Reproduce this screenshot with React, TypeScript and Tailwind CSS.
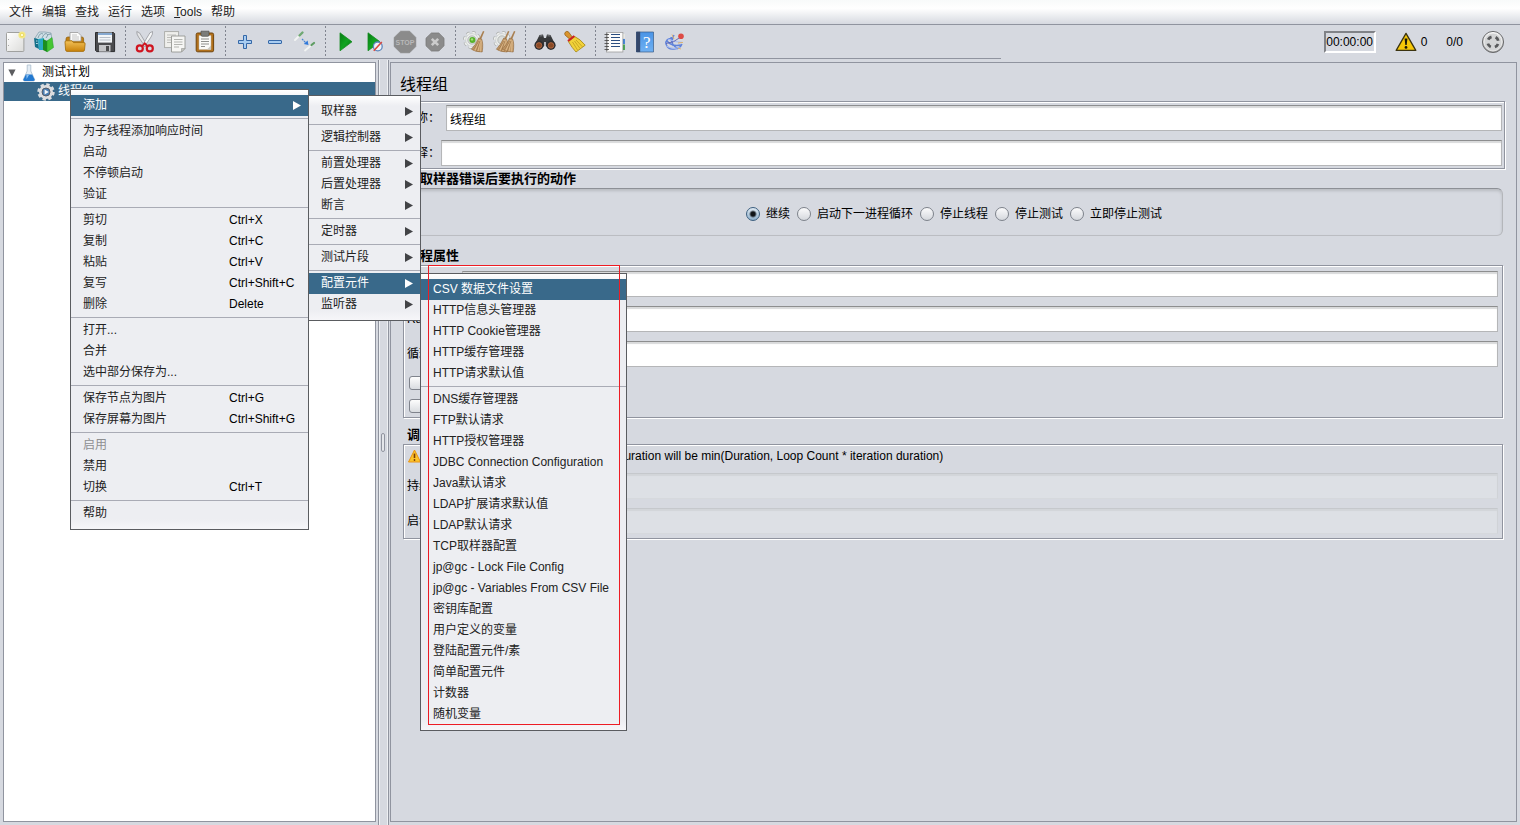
import React from "react";

type Item = { label: string; keys?: string; arrow?: boolean; active?: boolean; disabled?: boolean };
type Group = Item[];

const contextMenu: Group[] = [
  [{ label: "添加", arrow: true, active: true }],
  [{ label: "为子线程添加响应时间" }, { label: "启动" }, { label: "不停顿启动" }, { label: "验证" }],
  [
    { label: "剪切", keys: "Ctrl+X" },
    { label: "复制", keys: "Ctrl+C" },
    { label: "粘贴", keys: "Ctrl+V" },
    { label: "复写", keys: "Ctrl+Shift+C" },
    { label: "删除", keys: "Delete" },
  ],
  [{ label: "打开..." }, { label: "合并" }, { label: "选中部分保存为..." }],
  [
    { label: "保存节点为图片", keys: "Ctrl+G" },
    { label: "保存屏幕为图片", keys: "Ctrl+Shift+G" },
  ],
  [{ label: "启用", disabled: true }, { label: "禁用" }, { label: "切换", keys: "Ctrl+T" }],
  [{ label: "帮助" }],
];

const addMenu: Group[] = [
  [{ label: "取样器", arrow: true }],
  [{ label: "逻辑控制器", arrow: true }],
  [
    { label: "前置处理器", arrow: true },
    { label: "后置处理器", arrow: true },
    { label: "断言", arrow: true },
  ],
  [{ label: "定时器", arrow: true }],
  [{ label: "测试片段", arrow: true }],
  [
    { label: "配置元件", arrow: true, active: true },
    { label: "监听器", arrow: true },
  ],
];

const configMenu: Group[] = [
  [
    { label: "CSV 数据文件设置", active: true },
    { label: "HTTP信息头管理器" },
    { label: "HTTP Cookie管理器" },
    { label: "HTTP缓存管理器" },
    { label: "HTTP请求默认值" },
  ],
  [
    { label: "DNS缓存管理器" },
    { label: "FTP默认请求" },
    { label: "HTTP授权管理器" },
    { label: "JDBC Connection Configuration" },
    { label: "Java默认请求" },
    { label: "LDAP扩展请求默认值" },
    { label: "LDAP默认请求" },
    { label: "TCP取样器配置" },
    { label: "jp@gc - Lock File Config" },
    { label: "jp@gc - Variables From CSV File" },
    { label: "密钥库配置" },
    { label: "用户定义的变量" },
    { label: "登陆配置元件/素" },
    { label: "简单配置元件" },
    { label: "计数器" },
    { label: "随机变量" },
  ],
];

function Menu({ groups, className, label }: { groups: Group[]; className: string; label: string }) {
  return (
    <div
      role="menu"
      aria-label={label}
      className={`absolute border border-[#5a5c60] bg-[#edeef2] bg-[linear-gradient(to_bottom,#ffffff_0,#edeef2_10px,#edeef2_calc(100%-10px),#f6f6f9_100%)] py-[5px] ${className}`}
    >
      {groups.map((group, g) => (
        <React.Fragment key={g}>
          {g > 0 && <div role="separator" className="my-[2px] h-px bg-[#a9abb5]" />}
          {group.map((item) => (
            <button
              key={item.label}
              type="button"
              role="menuitem"
              disabled={item.disabled}
              className={`flex h-[21px] w-full items-center pr-[7px] pl-[12px] text-left leading-[21px] whitespace-nowrap ${
                item.active ? "bg-[#39698a] text-white" : item.disabled ? "text-[#8e8f91]" : "text-[#222222]"
              }`}
            >
              <span className={item.keys ? "w-[146px]" : "flex-1"}>{item.label}</span>
              {item.keys && <span className="text-black">{item.keys}</span>}
              {item.arrow && (
                <svg width="8" height="9" viewBox="0 0 8 9" className={item.active ? "fill-white" : "fill-[#424346]"}>
                  <path d="M0 0 L8 4.5 L0 9Z" />
                </svg>
              )}
            </button>
          ))}
        </React.Fragment>
      ))}
    </div>
  );
}

function Tool({ label, children }: { label: string; children: React.ReactNode }) {
  return (
    <button type="button" aria-label={label} className="flex h-[30px] w-[30px] items-center justify-center">
      <svg width="24" height="24" viewBox="0 0 24 24" fill="none">
        {children}
      </svg>
    </button>
  );
}

const Divider = () => (
  <div className="flex h-[32px] w-[10px] shrink-0 justify-center">
    <div className="w-px bg-[linear-gradient(#80848f_50%,transparent_50%)] bg-[length:1px_4px]" />
  </div>
);

function Gear() {
  return (
    <>
      <circle cx="9" cy="10" r="7.2" stroke="#a9adab" strokeWidth="3.4" strokeDasharray="3.2 2.45" />
      <circle cx="9" cy="10" r="7" stroke="#f0f1f0" strokeWidth="2.4" strokeDasharray="3 2.5" />
      <circle cx="9" cy="10" r="6.4" fill="#eceeed" stroke="#c3c7c5" strokeWidth="0.6" />
      <circle cx="9" cy="10" r="4.2" fill="#d9dcda" stroke="#9ba09c" strokeWidth="0.6" />
    </>
  );
}

function Broom({ x }: { x: number }) {
  return (
    <g transform={`translate(${x} 0)`}>
      <path d="M20 1 L21.4 1.5 L18.2 9 L16.4 8.4Z" fill="#a98052" />
      <path d="M15.8 8 L18.6 9 Q20.5 13 19.2 22 Q12 22 8.4 19.2 Q12.4 15.2 15.8 8Z" fill="#c39a6a" stroke="#8f6639" strokeWidth="0.6" />
      <path d="M16.5 10 L12 20.5 M17.3 10.5 L15 21 M18.2 10.5 L17.6 21.5" stroke="#e6c697" strokeWidth="0.7" />
      <path d="M16 11 L10.5 19.6 M17 11 L13.4 21" stroke="#8a6236" strokeWidth="0.5" />
    </g>
  );
}

function PlayShape({ x }: { x: number }) {
  return <path d={`M${x} 2.8 L${x + 12} 11.8 L${x} 20.8Z`} fill="url(#playFill)" stroke="#168a22" strokeWidth="0.8" />;
}

function Defs() {
  return (
    <svg width="0" height="0" className="absolute" aria-hidden="true">
      <defs>
        <linearGradient id="playFill" x1="0" y1="0" x2="1" y2="1">
          <stop offset="0" stopColor="#067d12" />
          <stop offset="0.5" stopColor="#12a422" />
          <stop offset="1" stopColor="#067312" />
        </linearGradient>
        <linearGradient id="folderFill" x1="0" y1="0" x2="0" y2="1">
          <stop offset="0" stopColor="#f3c25a" />
          <stop offset="1" stopColor="#c98209" />
        </linearGradient>
        <linearGradient id="paperFill" x1="0" y1="0" x2="1" y2="1">
          <stop offset="0" stopColor="#ffffff" />
          <stop offset="1" stopColor="#dcdcda" />
        </linearGradient>
        <linearGradient id="blueFill" x1="0" y1="0" x2="0" y2="1">
          <stop offset="0" stopColor="#4a94e6" />
          <stop offset="1" stopColor="#6fb1f3" />
        </linearGradient>
        <linearGradient id="steelFill" x1="0" y1="0" x2="0" y2="1">
          <stop offset="0" stopColor="#fafafa" />
          <stop offset="1" stopColor="#8f8f8f" />
        </linearGradient>
      </defs>
    </svg>
  );
}

function Toolbar() {
  return (
    <div role="toolbar" aria-label="工具栏" className="flex h-[34px] flex-1 items-center border-b border-[#90949f]">
      <Tool label="新建">
        <rect x="3.5" y="2.5" width="17.4" height="19" rx="1" fill="url(#paperFill)" stroke="#a0a19f" />
        <path d="M5.5 9v1M5.5 15v1" stroke="#aaaaaa" />
        <circle cx="19" cy="5" r="3.6" fill="#f4e98a" />
        <circle cx="19" cy="5" r="1.8" fill="#fffbd0" stroke="#e8d44c" strokeWidth="0.8" />
      </Tool>
      <Tool label="模板">
        <path d="M2 8 L6 2 L12 2 L18 3 L19 10 L8 12Z" fill="#cfdfe6" stroke="#7e9aa6" strokeWidth="0.7" />
        <path d="M5 8 Q7 2 10 4 M9 8 Q12 1 15 5 M13 8 Q15 3 18 4" stroke="#6f8d9a" strokeWidth="0.8" />
        <path d="M1 8 L5 9 L6 19 L2 17Z" fill="#14708a" />
        <path d="M5 9 L11 8 L11 20 L6 20Z" fill="#2aa9c4" />
        <path d="M10 9 L14 11 L14 22 L10 20Z" fill="#1c8d20" />
        <path d="M14 11 L19 7.5 L20.5 17.5 L14 22Z" fill="#46c633" stroke="#1d9a22" strokeWidth="0.5" />
        <path d="M3 11h1.5M3 13.5h1.8" stroke="#d9f3f7" strokeWidth="0.8" />
      </Tool>
      <Tool label="打开">
        <path d="M3 9 Q3 7 5 7 H19 Q20.6 7 20.6 9 V15 H3Z" fill="#c17f12" stroke="#8d5b06" strokeWidth="0.7" />
        <path d="M7 11 V2.5 H15 L18 5.5 V11Z" fill="#fbfbfb" stroke="#9b9b9b" strokeWidth="0.8" />
        <path d="M9 5h5M9 7h7M9 9h7" stroke="#b9b9b9" strokeWidth="0.8" />
        <path d="M2 12 Q2 10.8 3.2 10.8 H9 L10.5 12.6 H21 Q22.3 12.6 22.1 14 L21.5 20 Q21.3 21.4 20 21.4 H4 Q2.8 21.4 2.6 20Z" fill="url(#folderFill)" stroke="#a36c09" strokeWidth="0.8" />
      </Tool>
      <Tool label="保存">
        <path d="M2.5 2.5 H20.5 L21.6 3.6 V21.6 H3.6 L2.5 20.5Z" fill="#4a4b4e" stroke="#2c2d2f" />
        <rect x="5" y="2.6" width="14" height="10" fill="#f2f5f8" />
        <path d="M5 4h14" stroke="#86a9d1" strokeWidth="2" />
        <path d="M6.5 7.5h11M6.5 10h11" stroke="#b2bac4" strokeWidth="0.9" />
        <rect x="6" y="15" width="11.5" height="6.6" fill="#c4c5c8" />
        <rect x="13" y="16" width="3" height="5" fill="#4b4c4e" />
      </Tool>
      <Divider />
      <Tool label="剪切">
        <path d="M3.8 1.5 Q7 2 8.5 6 L14.5 16 L12 16.5 L5.5 7Q3.5 4 3.8 1.5Z" fill="#e4e5e7" stroke="#8b8d91" strokeWidth="0.7" />
        <path d="M19.5 1.5 Q16.5 2 15 6 L9 16 L11.5 16.5 L18 7Q20 4 19.5 1.5Z" fill="#f6f7f8" stroke="#8b8d91" strokeWidth="0.7" />
        <ellipse cx="6.8" cy="18.4" rx="3" ry="3" stroke="#cf1520" strokeWidth="2.2" />
        <ellipse cx="16.8" cy="18.4" rx="3" ry="3" stroke="#cf1520" strokeWidth="2.2" />
        <path d="M9 16.4 L11.8 13.4 L14.6 16.4" stroke="#cf1520" strokeWidth="1.8" />
      </Tool>
      <Tool label="复制">
        <rect x="1.6" y="1.6" width="14" height="16" fill="#efefec" stroke="#a9aaa7" strokeWidth="0.9" />
        <path d="M4 5h9M4 7.5h4M4 10h4M4 12.5h4" stroke="#bdbdba" />
        <path d="M8.5 6 H22 V18.5 L18.5 22 H8.5Z" fill="#f6f6f4" stroke="#969793" strokeWidth="0.9" />
        <path d="M11 9.5h8.5M11 12h8.5M11 14.5h8.5M11 17h5" stroke="#b3b4b0" />
        <path d="M18.5 22 V18.5 H22Z" fill="#c5c6c2" stroke="#969793" strokeWidth="0.6" />
      </Tool>
      <Tool label="粘贴">
        <rect x="3.2" y="3" width="17.4" height="18.8" rx="1.5" fill="#b3711b" stroke="#70450c" />
        <path d="M6 5.5 H18 V19.5 H6Z" fill="#fafaf8" stroke="#bcb6a8" strokeWidth="0.5" />
        <path d="M8 1.2 H16 V5 Q16 6.3 14.8 6.3 H9.2 Q8 6.3 8 5Z" fill="#7c7d7a" stroke="#4d4e4b" strokeWidth="0.7" />
        <path d="M8 9h8M8 11.5h8M8 14h8M8 16.5h4" stroke="#8f908d" />
        <path d="M14 19.5 L18 15.5 V19.5Z" fill="#c9c8c2" />
      </Tool>
      <Divider />
      <Tool label="展开">
        <path d="M10.5 5.5 H13.5 V10.5 H18.5 V13.5 H13.5 V18.5 H10.5 V13.5 H5.5 V10.5 H10.5Z" fill="#a9cdf1" stroke="#3568a8" />
      </Tool>
      <Tool label="折叠">
        <rect x="5.5" y="10.5" width="13" height="3" rx="0.5" fill="#a9cdf1" stroke="#3568a8" />
      </Tool>
      <Tool label="切换">
        <path d="M2 10 L8 4" stroke="#f2f4f2" strokeWidth="2" strokeLinecap="round" />
        <path d="M6.5 5.5 L9.5 2.5" stroke="#6fa873" strokeWidth="2.4" strokeLinecap="round" />
        <path d="M12 20.5 L18 15.5" stroke="#f2f4f2" strokeWidth="1.8" strokeLinecap="round" />
        <path d="M18.5 15 L21 13" stroke="#5f9d63" strokeWidth="2.2" strokeLinecap="round" />
        <path d="M9 9 L13 13" stroke="#4a86d4" strokeWidth="1.2" strokeDasharray="2 0.8" />
        <path d="M15.5 15 L10.8 14 L14.6 10.6Z" fill="#2f78da" />
      </Tool>
      <Divider />
      <Tool label="启动">
        <PlayShape x={7} />
      </Tool>
      <Tool label="不停顿启动">
        <PlayShape x={5} />
        <circle cx="14.8" cy="16.4" r="4.4" fill="#eef3f9" stroke="#5d87bd" strokeWidth="1.3" />
        <path d="M10.8 20.8 L18.8 12" stroke="#dd4a3f" strokeWidth="1.6" />
      </Tool>
      <Tool label="停止">
        <path d="M7.6 1.2 H16.6 L22.8 7.4 V16.6 L16.6 22.8 H7.6 L1.2 16.6 V7.4Z" fill="#8b8b8b" stroke="#7d7d7d" strokeWidth="0.6" />
        <text x="12" y="14.6" textAnchor="middle" fontFamily="Liberation Sans, sans-serif" fontWeight="bold" fontSize="7" fill="#b9b9b9">
          STOP
        </text>
      </Tool>
      <Tool label="关闭">
        <path d="M8.4 3 H15.8 L21 8.2 V15.8 L15.8 21 H8.4 L3 15.8 V8.2Z" fill="#8b8b8b" stroke="#7a7a7a" strokeWidth="0.8" />
        <path d="M8.8 8.8 L15.2 15.2 M15.2 8.8 L8.8 15.2" stroke="#cccccc" strokeWidth="2.6" />
      </Tool>
      <Divider />
      <Tool label="清除">
        <Gear />
        <circle cx="9.4" cy="10" r="3" fill="#58b32b" />
        <circle cx="9" cy="9.4" r="1.2" fill="#a4e07c" />
        <Broom x={0} />
      </Tool>
      <Tool label="清除全部">
        <Gear />
        <Broom x={-5} />
        <Broom x={1} />
      </Tool>
      <Divider />
      <Tool label="查找">
        <path d="M6.5 5 L10 4.6 L11 8 H13 L14 4.6 L17.5 5 L22 14 L18 20 L12.8 16 V12 H11.2 V16 L6 20 L2 14Z" fill="#37383a" />
        <path d="M6.5 6 L9.5 5.6 M14.5 5.6 L17.5 6" stroke="#77797c" strokeWidth="1.2" />
        <circle cx="6" cy="15.2" r="4.6" fill="#2d2d2e" />
        <circle cx="18" cy="15.2" r="4.6" fill="#2d2d2e" />
        <circle cx="6" cy="15.4" r="2.8" fill="#8b4a25" stroke="#c0714a" strokeWidth="0.7" />
        <circle cx="18" cy="15.4" r="2.8" fill="#8b4a25" stroke="#c0714a" strokeWidth="0.7" />
      </Tool>
      <Tool label="重置查找">
        <path d="M2 2.6 Q3.6 0.6 5.4 1.8 L9.6 7.4 L7 9.4 L2.2 5.2 Q1.2 4 2 2.6Z" fill="#d9932c" stroke="#8f5b10" strokeWidth="0.7" />
        <path d="M5.4 11.6 L11.8 6.6 Q17 9 22.2 15.2 L13 22 Q9.2 18 5.4 11.6Z" fill="#f1d23a" stroke="#a38413" strokeWidth="0.8" />
        <path d="M5 11 L11.4 6" stroke="#cc2222" strokeWidth="2.2" />
        <path d="M9.5 12 L14.5 20 M11.5 11 L17 18.4 M13 10 L19.4 16.8" stroke="#b7961a" strokeWidth="0.7" />
      </Tool>
      <Divider />
      <Tool label="函数助手">
        <rect x="17" y="4" width="4.6" height="4.4" fill="#f0efe6" />
        <rect x="17" y="9" width="4.8" height="5" fill="#2673d6" />
        <rect x="17" y="14.5" width="4.8" height="5.5" fill="#2f9b3a" />
        <rect x="3.5" y="2.5" width="16.4" height="19.5" fill="#fbfbfb" stroke="#9d9d9d" strokeWidth="0.8" />
        <path d="M8 4.5h9M8 7.5h9M8 10.5h9M8 13.5h9M8 16.5h9" stroke="#2a4d80" strokeWidth="1.1" />
        <path d="M1.5 4.5h4.5M1.5 7.5h4.5M1.5 10.5h4.5M1.5 13.5h4.5M1.5 16.5h4.5M1.5 19.5h4.5" stroke="#555555" strokeWidth="0.9" />
        <path d="M4 3v18" stroke="#222222" strokeWidth="0.5" />
      </Tool>
      <Tool label="帮助">
        <path d="M3.5 2 H20.5 V22 H3.5Z" fill="url(#blueFill)" stroke="#3a5c87" strokeWidth="0.7" />
        <path d="M3.2 1.8 H7.2 V22 H3.2Z" fill="#33476b" />
        <text x="13.8" y="17.6" textAnchor="middle" fontFamily="Liberation Serif, serif" fontSize="17" fill="#ffffff">
          ?
        </text>
      </Tool>
      <Tool label="分析">
        <path d="M9 8 Q2 9 3 14 Q5 20 11 19 Q17 19 19 14 M4 11 Q9 17 18 15 M8 7 Q8 15 15 19 M11 5 Q8 11 10 16" stroke="#5f82da" strokeWidth="1.4" />
        <path d="M3.5 16 Q10 20 17 17 M5 9 Q11 12 19 12.5" stroke="#a9bdf0" strokeWidth="1.3" />
        <path d="M9 4.5 L11 9 M15 13 L20 12.4 M15 18 L18 19" stroke="#dfae62" strokeWidth="0.9" />
        <path d="M3 13.5 Q11 13 17.6 7" stroke="#5a5fae" strokeWidth="0.9" />
        <circle cx="18" cy="6.2" r="2.8" fill="#dd4b45" />
      </Tool>
    </div>
  );
}

function Status() {
  return (
    <div className="flex h-[34px] w-[519px] items-center justify-end pr-[15px] leading-[18px] text-black">
      <div className="flex h-[22px] w-[52px] items-center justify-center border-t-2 border-r-2 border-b-2 border-l-2 border-t-[#808287] border-r-white border-b-white border-l-[#808287]">
        00:00:00
      </div>
      <svg width="22" height="20" viewBox="0 0 22 20" className="ml-[19px]">
        <path d="M11 1.4 L20.8 18.4 H1.2Z" fill="#f7c808" stroke="#3b3310" strokeWidth="1.3" strokeLinejoin="round" />
        <path d="M9.6 6.4 H12.4 L11.7 13 H10.3Z" fill="#1c1a0b" />
        <circle cx="11" cy="15.4" r="1.4" fill="#1c1a0b" />
      </svg>
      <span className="ml-[4px]">0</span>
      <span className="ml-[19px]">0/0</span>
      <svg width="24" height="24" viewBox="0 0 24 24" className="ml-[18px]">
        <circle cx="12" cy="12" r="10.6" fill="url(#steelFill)" stroke="#6d6e70" />
        <circle cx="12" cy="12" r="9" fill="#d4d5d6" stroke="#f4f4f4" strokeWidth="0.8" />
        <circle cx="12" cy="12" r="5.4" fill="none" stroke="#58595b" strokeWidth="2.8" strokeDasharray="4.2 4.28" strokeDashoffset="-2.1" />
      </svg>
    </div>
  );
}

const etched = "border border-[#90949f] shadow-[1px_1px_0_#ffffff,inset_1px_1px_0_#ffffff]";
const field =
  "h-[26px] min-w-0 flex-1 border border-t-[#8d8e8f] border-r-[#b5b6b8] border-b-[#b5b6b8] border-l-[#b5b6b8] bg-white px-[3px] text-black shadow-[inset_0_2px_1px_#d9dadb] outline-none";
const fieldOff =
  "h-[26px] min-w-0 flex-1 border border-t-[#c5c8cc] border-r-[#d0d3d7] border-b-[#d6d9dd] border-l-[#d0d3d7] bg-[#dde0e5] shadow-[inset_0_2px_1px_#d2d5d9]";
const check =
  "h-[14px] w-[14px] appearance-none rounded-[3px] border border-[#7f838c] bg-[linear-gradient(#fdfdfd,#d9dce0)]";

function Radio({ id, label, checked }: { id: string; label: string; checked?: boolean }) {
  return (
    <div className="flex items-center gap-[6px]">
      <input
        type="radio"
        id={id}
        name="on-error"
        defaultChecked={checked}
        className="h-[14px] w-[14px] appearance-none rounded-full border border-[#7d828b] bg-[linear-gradient(#fbfbfc,#d5d8dd)] checked:border-[#3c5f7f] checked:bg-[radial-gradient(circle,#101418_0,#101418_2px,transparent_4px),linear-gradient(#dfe9f2,#8fb0cc)]"
      />
      <label htmlFor={id}>{label}</label>
    </div>
  );
}

function TreePanel() {
  return (
    <div role="tree" aria-label="测试计划" className="mt-[3px] mb-[3px] w-[373px] shrink-0 border border-[#90949f] bg-white">
      <div role="treeitem" className="flex h-[19px] items-center pl-[4px] leading-[19px] text-black">
        <svg width="8" height="8" viewBox="0 0 8 8">
          <path d="M0.4 0.5 H7.6 L4 7.5Z" fill="#5c5d60" />
        </svg>
        <svg width="14" height="18" viewBox="0 0 14 18" className="ml-[6px]">
          <path d="M5.2 1 H8.8 V7 L12.6 15.4 Q13 17 11.4 17 H2.6 Q1 17 1.4 15.4 L5.2 7Z" fill="#e4edf5" stroke="#a9bccd" strokeWidth="0.8" />
          <path d="M3.8 10.4 H10.2 L12.6 15.6 Q12.8 17 11.4 17 H2.6 Q1.2 17 1.4 15.6Z" fill="#2379d0" />
          <path d="M4.4 11 L7 11 L4.6 15Z" fill="#8cc2f2" />
        </svg>
        <span className="ml-[6px]">测试计划</span>
      </div>
      <div role="treeitem" aria-selected="true" className="flex h-[19px] items-center bg-[#39698a] pl-[33px] leading-[19px] text-white">
        <svg width="18" height="18" viewBox="0 0 18 18">
          <circle cx="9" cy="9" r="7" fill="none" stroke="#dcdddf" strokeWidth="3.4" strokeDasharray="3.2 2.3" />
          <circle cx="9" cy="9" r="7" fill="#dcdddf" />
          <circle cx="9" cy="9" r="4" fill="#4b7fb4" stroke="#51565e" strokeWidth="0.9" />
          <path d="M7.6 6.6 L11.8 9 L7.6 11.4Z" fill="#f4f6f8" />
        </svg>
        <span className="ml-[3px]">线程组</span>
      </div>
    </div>
  );
}

function Editor() {
  return (
    <main className="mt-[3px] mb-[3px] min-w-0 flex-1 border border-[#90949f] text-black">
      <h1 className="flex h-[38px] items-center pt-[5px] pl-[9px] text-[16px] leading-[20px]">线程组</h1>
      <div className={`mr-[11px] ml-[8px] flex flex-col gap-[9px] pt-[3px] pr-[2px] pb-[2px] pl-[4px] ${etched}`}>
        <div className="flex items-center">
          <label htmlFor="name" className="w-[42px]">名称：</label>
          <input id="name" defaultValue="线程组" className={field} />
        </div>
        <div className="flex items-center">
          <label htmlFor="comment" className="w-[37px]">注释：</label>
          <input id="comment" className={field} />
        </div>
      </div>

      <section className="mt-px mr-[13px] ml-[12px]">
        <h2 className="pl-[4px] text-[13px] leading-[18px] font-bold">在取样器错误后要执行的动作</h2>
        <div className="flex h-[48px] items-center justify-center gap-[7px] rounded-[6px] border border-t-[#8d9096] border-r-[#b4b6ba] border-b-[#bbbdc2] border-l-[#b4b6ba] pt-[4px] pl-[2px] shadow-[inset_0_2px_3px_#b9bcc1]">
          <Radio id="go" label="继续" checked />
          <Radio id="next" label="启动下一进程循环" />
          <Radio id="stop-thread" label="停止线程" />
          <Radio id="stop-test" label="停止测试" />
          <Radio id="stop-now" label="立即停止测试" />
        </div>
      </section>

      <section className="mt-[11px] mr-[13px] ml-[12px]">
        <h2 className="pl-[4px] text-[13px] leading-[18px] font-bold">线程属性</h2>
        <div className={`flex flex-col gap-[9px] pt-[5px] pr-[4px] pb-[4px] pl-[3px] ${etched}`}>
          <div className="flex items-center">
            <label htmlFor="threads" className="w-[55px]">线程数：</label>
            <input id="threads" className={field} />
          </div>
          <div className="flex items-center">
            <label htmlFor="ramp" className="w-[170px]">Ramp-Up Period (in seconds):</label>
            <input id="ramp" className={field} />
          </div>
          <div className="flex items-center">
            <label htmlFor="loops" className="w-[60px]">循环次数</label>
            <input type="checkbox" id="forever" aria-label="永远" className={`mr-[6px] ${check}`} />
            <input id="loops" className={field} />
          </div>
          <div className="flex h-[14px] items-center pl-[2px]">
            <input type="checkbox" id="delay" aria-label="延迟创建线程" className={check} />
          </div>
          <div className="flex h-[14px] items-center pl-[2px]">
            <input type="checkbox" id="scheduler" aria-label="调度器" className={check} />
          </div>
        </div>
      </section>

      <section className="mt-[8px] mr-[13px] ml-[12px]">
        <h2 className="pl-[4px] text-[13px] leading-[18px] font-bold">调度器配置</h2>
        <div className={`flex flex-col gap-[9px] pt-[3px] pr-[4px] pb-[4px] pl-[3px] ${etched}`}>
          <div className="flex h-[16px] items-center pl-px">
            <svg width="13" height="14" viewBox="0 0 13 14">
              <path d="M6.5 1 L12.5 13 H0.5Z" fill="#fbc42a" stroke="#ea9410" strokeLinejoin="round" />
              <path d="M6.5 4.6V9" stroke="#7a3a08" strokeWidth="1.6" />
              <circle cx="6.5" cy="11" r="0.9" fill="#7a3a08" />
            </svg>
            <span className="ml-[14px] whitespace-nowrap">
              If Loop Count is not -1 or Forever, duration will be min(Duration, Loop Count * iteration duration)
            </span>
          </div>
          <div className="flex items-center">
            <label htmlFor="duration" className="w-[90px]">持续时间（秒）</label>
            <input id="duration" disabled className={fieldOff} />
          </div>
          <div className="flex items-center">
            <label htmlFor="startup" className="w-[90px]">启动延迟（秒）</label>
            <input id="startup" disabled className={fieldOff} />
          </div>
        </div>
      </section>
    </main>
  );
}

export default function App() {
  return (
    <div className="relative flex min-h-screen flex-col overflow-hidden bg-[#d6d9e0] font-['Liberation_Sans','Noto_Sans_CJK_SC',sans-serif] text-[12px] leading-[18px]">
      <Defs />
      <nav className="flex h-[25px] items-center gap-[9px] border-b border-[#90949f] bg-[linear-gradient(#f8fafa_0%,#ffffff_35%,#d6d9e0_100%)] pl-[9px] text-[#222222]">
        <button type="button">文件</button>
        <button type="button">编辑</button>
        <button type="button">查找</button>
        <button type="button">运行</button>
        <button type="button">选项</button>
        <button type="button">
          <u>T</u>ools
        </button>
        <button type="button">帮助</button>
      </nav>
      <header className="flex">
        <Toolbar />
        <Status />
      </header>
      <div className="flex flex-1 pr-[3px] pl-[3px]">
        <TreePanel />
        <div
          role="separator"
          aria-orientation="vertical"
          className="mt-px mr-px ml-[2px] flex w-[11px] shrink-0 items-center justify-center border-r border-l border-[#90949f] shadow-[inset_1px_0_0_#eef0f3,inset_-1px_0_0_#eef0f3]"
        >
          <div className="mr-[2px] h-[19px] w-[4px] rounded-[2px] border border-[#90949f] bg-[#e4e6ea]" />
        </div>
        <Editor />
      </div>

      <Menu groups={contextMenu} label="线程组" className="top-[89px] left-[70px] w-[239px]" />
      <Menu groups={addMenu} label="添加" className="top-[95px] left-[308px] w-[113px]" />
      <Menu groups={configMenu} label="配置元件" className="top-[273px] left-[420px] w-[207px]" />
      <div className="pointer-events-none absolute top-[265px] left-[428px] h-[460px] w-[192px] border border-[#ed1c24]" />
    </div>
  );
}
